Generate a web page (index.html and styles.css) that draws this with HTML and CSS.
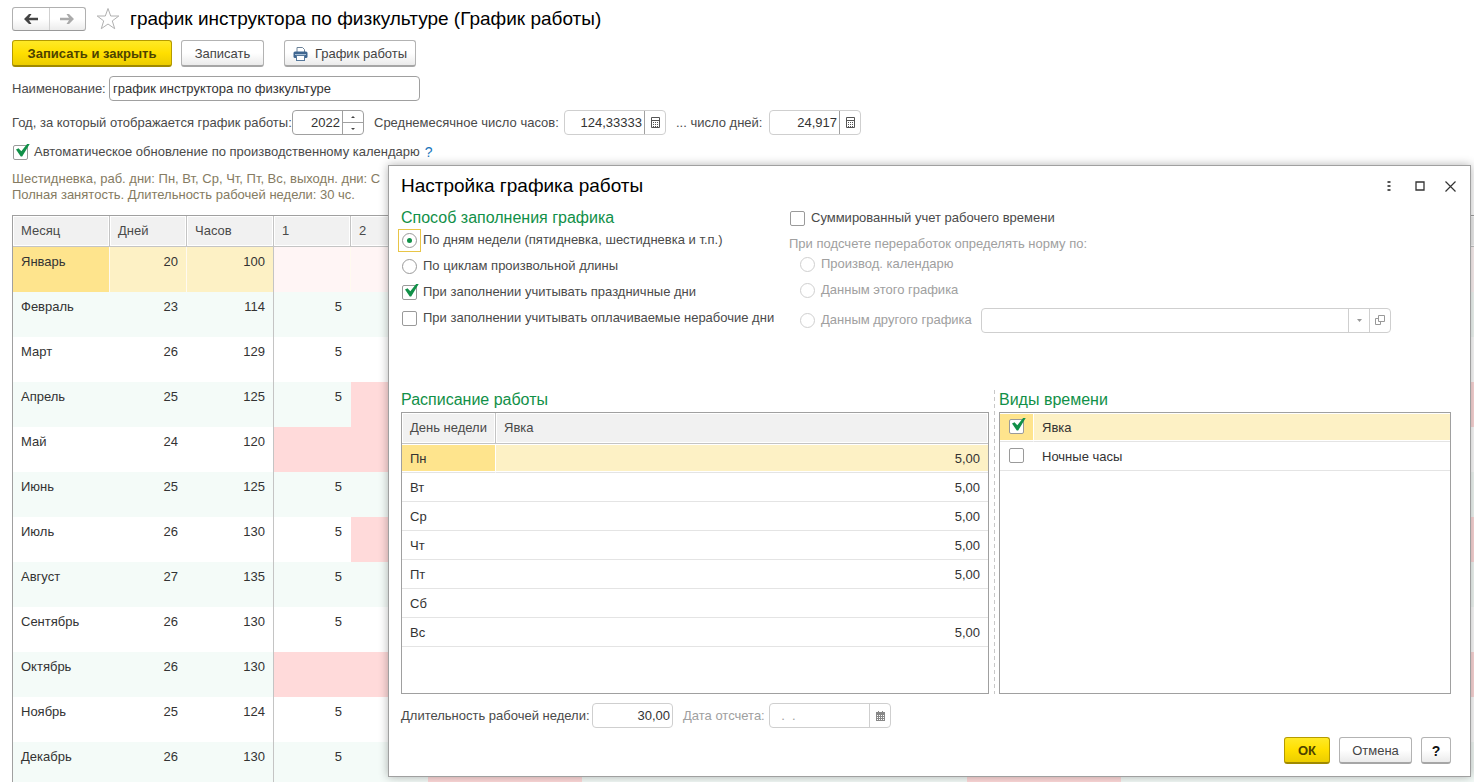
FILE: index.html
```html
<!DOCTYPE html>
<html lang="ru">
<head>
<meta charset="utf-8">
<title>График работы</title>
<link rel="stylesheet" href="styles.css">
</head>
<body>
<main class="page">
  <header class="page-head">
    <div class="nav-group">
      <button class="nav-btn" type="button" aria-label="Назад"><svg width="14" height="10" viewBox="0 0 14 10"><path d="M0 5 5 0h2.500L5 3.800h9v2.400H5L7.500 10H5z" fill="#444"/></svg></button>
      <button class="nav-btn" type="button" aria-label="Вперёд"><svg width="14" height="10" viewBox="0 0 14 10"><path d="M14 5 9 0H6.500L9 3.800H0v2.400h9L6.500 10H9z" fill="#aaa"/></svg></button>
    </div>
    <svg class="star" width="24" height="24" viewBox="0 0 24 24"><path d="M12 1.500 14.700 9h8.100l-6.500 4.900 2.400 7.800L12 17l-6.700 4.700 2.400-7.800L1.200 9h8.100z" fill="#fff" stroke="#b0b0b0"/></svg>
    <h1 class="title">график инструктора по физкультуре (График работы)</h1>
  </header>

  <div class="toolbar">
    <button class="btn btn-primary btn-save" type="button">Записать и закрыть</button>
    <button class="btn btn-write" type="button">Записать</button>
    <button class="btn btn-print" type="button">
      <svg width="15" height="14" viewBox="0 0 15 14"><path d="M4 5V.500h5.500L11.500 2.500V5" fill="#fff" stroke="#6b8299"/><rect x=".5" y="4.500" width="14" height="6.500" rx="1.500" fill="#3f6690"/><path d="M2 7.500h11" stroke="#a9c0d6"/><rect x="3.500" y="8.500" width="8" height="5" fill="#fff" stroke="#57799c"/></svg>
      <span>График работы</span>
    </button>
  </div>

  <div class="row name-row">
    <label for="name">Наименование:</label>
    <input class="field name-field" id="name" type="text" value="график инструктора по физкультуре">
  </div>

  <div class="row year-row">
    <label for="year">Год, за который отображается график работы:</label>
    <div class="combo combo-year">
      <input class="num" id="year" type="text" value="2022">
      <div class="spin">
        <button type="button" aria-label="Больше"><svg width="4" height="2"><path d="M0 2 2 0l2 2z" fill="#444"/></svg></button>
        <button type="button" aria-label="Меньше"><svg width="4" height="2"><path d="M0 0h4L2 2z" fill="#444"/></svg></button>
      </div>
    </div>
    <label class="hours-label" for="hours">Среднемесячное число часов:</label>
    <div class="combo combo-hours soft">
      <input class="num" id="hours" type="text" value="124,33333">
      <button class="addon" type="button" aria-label="Калькулятор"><svg width="9" height="11"><path d="M.5.500h8v10h-8zM1 3.500h7" fill="none" stroke="#555"/><path d="M2 5.500h5M2 7.500h5M2 9.500h5" stroke="#555" stroke-dasharray="1 1"/></svg></button>
    </div>
    <label class="days-label" for="days">... число дней:</label>
    <div class="combo combo-days soft">
      <input class="num" id="days" type="text" value="24,917">
      <button class="addon" type="button" aria-label="Калькулятор"><svg width="9" height="11"><path d="M.5.500h8v10h-8zM1 3.500h7" fill="none" stroke="#555"/><path d="M2 5.500h5M2 7.500h5M2 9.500h5" stroke="#555" stroke-dasharray="1 1"/></svg></button>
    </div>
  </div>

  <div class="row auto-row">
    <label class="option"><input class="check" type="checkbox" checked><span>Автоматическое обновление по производственному календарю</span></label>
    <a class="hint" href="#">?</a>
  </div>

  <p class="summary">Шестидневка, раб. дни: Пн, Вт, Ср, Чт, Пт, Вс, выходн. дни: С<br>Полная занятость. Длительность рабочей недели: 30 чс.</p>

  <div class="calendar-wrap">
    <table class="calendar">
      <colgroup><col class="c-month"><col class="c-days"><col class="c-hours"><col class="c-day" span="16"></colgroup>
      <thead><tr id="calendar-head"><th>Месяц</th><th>Дней</th><th>Часов</th><th>1</th><th>2</th></tr></thead>
      <tbody id="calendar-body"></tbody>
    </table>
  </div>
</main>

<section class="dialog" role="dialog" aria-labelledby="dialog-title">
  <header class="dialog-head">
    <h2 class="title" id="dialog-title">Настройка графика работы</h2>
    <div class="window-tools">
      <button type="button" aria-label="Ещё"><svg width="4" height="12"><path d="M.5 1h3v2h-3zM.5 5h3v2h-3zM.5 9h3v2h-3z" fill="#555"/></svg></button>
      <button type="button" aria-label="Развернуть"><svg width="10" height="10"><path d="M1 1h8v8H1z" fill="none" stroke="#333" stroke-width="1.300"/></svg></button>
      <button type="button" aria-label="Закрыть"><svg width="11" height="11"><path d="m.5.500 10 10m0-10-10 10" stroke="#333" stroke-width="1.200"/></svg></button>
    </div>
  </header>

  <div class="settings">
    <fieldset class="method">
      <legend class="section-title">Способ заполнения графика</legend>
      <label class="option"><span class="radio-slot focused"><input class="radio" type="radio" name="method" checked></span><span>По дням недели (пятидневка, шестидневка и т.п.)</span></label>
      <label class="option"><span class="radio-slot"><input class="radio" type="radio" name="method"></span><span>По циклам произвольной длины</span></label>
      <label class="option"><input class="check" type="checkbox" checked><span>При заполнении учитывать праздничные дни</span></label>
      <label class="option"><input class="check" type="checkbox"><span>При заполнении учитывать оплачиваемые нерабочие дни</span></label>
    </fieldset>
    <div class="norm">
      <label class="option"><input class="check" type="checkbox"><span>Суммированный учет рабочего времени</span></label>
      <p class="muted norm-title">При подсчете переработок определять норму по:</p>
      <div class="norm-list muted">
        <label class="option"><input class="radio" type="radio" name="norm" disabled><span>Производ. календарю</span></label>
        <label class="option"><input class="radio" type="radio" name="norm" disabled><span>Данным этого графика</span></label>
        <div class="other-row">
          <label class="option"><input class="radio" type="radio" name="norm" disabled><span>Данным другого графика</span></label>
          <div class="combo combo-other soft">
            <input type="text" aria-label="Другой график" disabled>
            <button class="addon" type="button" aria-label="Выбрать" disabled><svg width="5" height="3"><path d="M0 0h5L2.500 3z" fill="#999"/></svg></button>
            <button class="addon" type="button" aria-label="Открыть" disabled><svg width="10" height="10"><path d="M3.500.500h6v6h-6zM3 3.500H.5v6h5V7" fill="none" stroke="#999"/></svg></button>
          </div>
        </div>
      </div>
    </div>
  </div>

  <div class="panels">
    <section class="panel">
      <h3 class="section-title">Расписание работы</h3>
      <div class="list-box">
        <table class="list schedule">
          <colgroup><col class="c-weekday"><col></colgroup>
          <thead><tr><th>День недели</th><th>Явка</th></tr></thead>
          <tbody>
            <tr class="selected"><td>Пн</td><td>5,00</td></tr>
            <tr><td>Вт</td><td>5,00</td></tr>
            <tr><td>Ср</td><td>5,00</td></tr>
            <tr><td>Чт</td><td>5,00</td></tr>
            <tr><td>Пт</td><td>5,00</td></tr>
            <tr><td>Сб</td><td></td></tr>
            <tr><td>Вс</td><td>5,00</td></tr>
          </tbody>
        </table>
      </div>
    </section>
    <div class="splitter"></div>
    <section class="panel">
      <h3 class="section-title">Виды времени</h3>
      <div class="list-box">
        <table class="list kinds">
          <colgroup><col class="c-check"><col></colgroup>
          <tbody>
            <tr class="selected"><td><input class="check" id="kind-work" type="checkbox" checked></td><td><label for="kind-work">Явка</label></td></tr>
            <tr><td><input class="check" id="kind-night" type="checkbox"></td><td><label for="kind-night">Ночные часы</label></td></tr>
          </tbody>
        </table>
      </div>
    </section>
  </div>

  <div class="row week-row">
    <label for="week">Длительность рабочей недели:</label>
    <input class="field soft num week-field" id="week" type="text" value="30,00">
    <label class="muted date-label" for="start">Дата отсчета:</label>
    <div class="combo combo-date soft">
      <input id="start" type="text" value="  .  ." disabled>
      <button class="addon" type="button" aria-label="Календарь" disabled><svg width="9" height="10"><path d="M0 1h9v9H0z" fill="#888"/><path d="M1 4.500h7M1 6.500h7M1 8.500h7" stroke="#fff" stroke-dasharray="1 1"/><path d="M2.500 0v2M6.500 0v2" stroke="#888"/></svg></button>
    </div>
  </div>

  <footer class="dialog-foot">
    <button class="btn btn-primary btn-ok" type="button">ОК</button>
    <button class="btn btn-cancel" type="button">Отмена</button>
    <button class="btn btn-help" type="button">?</button>
  </footer>
</section>
<script src="script.js"></script>
</body>
</html>
```

FILE: styles.css
```css
* {
  box-sizing: border-box;
}

body {
  margin: 0;
  height: 100vh;
  overflow: hidden;
  position: relative;
  background: #fff;
  color: #4a4a4a;
  font: 13px/16px "Liberation Sans", Arial, sans-serif;
}

h1, h2, h3, p, fieldset, legend {
  margin: 0;
  padding: 0;
  border: 0;
  font-weight: normal;
}

button, input {
  font: inherit;
  color: inherit;
  margin: 0;
}

svg {
  display: block;
  flex: none;
}

.page {
  padding: 6px 0 0 12px;
}

.page-head {
  display: flex;
  align-items: center;
  height: 25px;
}

.title {
  font-size: 19px;
  line-height: 24px;
  color: #000;
  white-space: nowrap;
}

.nav-group {
  display: flex;
  width: 74px;
  height: 24px;
  border: 1px solid #b0b0b0;
  border-bottom-color: #999;
  border-radius: 3px;
  background: linear-gradient(#fff 50%, #ececec);
}

.nav-btn {
  flex: 1;
  display: flex;
  align-items: center;
  justify-content: center;
  border: 0;
  padding: 0;
  background: none;
}

.nav-btn + .nav-btn {
  border-left: 1px solid #d0d0d0;
}

.star {
  margin: 0 10px;
}

.toolbar {
  display: flex;
  margin-top: 9px;
}

.btn {
  display: flex;
  align-items: center;
  justify-content: center;
  gap: 7px;
  height: 27px;
  padding: 1px 0 0;
  border: 1px solid #b3b3b3;
  border-bottom: 2px solid #a6a6a6;
  border-radius: 3px;
  background: linear-gradient(#fff 50%, #ebebeb);
  color: #444;
  white-space: nowrap;
}

.btn-primary {
  border-color: #b59b00;
  border-bottom-color: #a08a00;
  background: linear-gradient(#ffe926, #ffdf00 50%, #eccd00);
  color: #4d4300;
  font-weight: bold;
}

.btn-save {
  width: 160px;
}

.btn-write {
  width: 83px;
  margin-left: 9px;
}

.btn-print {
  width: 132px;
  margin-left: 20px;
}

.row {
  display: flex;
  align-items: center;
  white-space: nowrap;
}

.name-row {
  margin-top: 9px;
}

.name-row label {
  width: 97px;
}

.field {
  height: 25px;
  border: 1px solid #a0a0a0;
  border-radius: 4px;
  padding: 0 3px;
  background: #fff;
  color: #333;
}

.name-field {
  width: 311px;
}

.year-row {
  margin-top: 9px;
}

.year-row > label:first-child {
  width: 280px;
}

.hours-label {
  width: 190px;
  margin-left: 10px;
}

.days-label {
  width: 93px;
  margin-left: 10px;
}

.combo {
  display: flex;
  height: 25px;
  border: 1px solid #a0a0a0;
  border-radius: 4px;
  background: #fff;
  overflow: hidden;
}

.combo.soft,
.field.soft {
  border-color: #cfcfcf;
}

.combo input {
  flex: 1;
  min-width: 0;
  border: 0;
  padding: 0 2px;
  background: none;
  color: #333;
}

.num {
  text-align: right;
}

.combo-year {
  width: 72px;
}

.combo-hours {
  width: 102px;
}

.combo-days {
  width: 92px;
}

.spin {
  display: flex;
  flex-direction: column;
  width: 21px;
  border-left: 1px solid #a0a0a0;
}

.spin button {
  flex: 1;
  display: flex;
  align-items: center;
  justify-content: center;
  border: 0;
  padding: 0;
  background: none;
}

.spin button + button {
  border-top: 1px solid #a0a0a0;
}

.addon {
  display: flex;
  align-items: center;
  justify-content: center;
  width: 21px;
  padding: 0;
  border: 0;
  border-left: 1px solid #cfcfcf;
  background: none;
}

.combo-hours .addon,
.combo-days .addon {
  border-left-color: #a0a0a0;
}

.option {
  display: flex;
  align-items: center;
  gap: 6px;
  white-space: nowrap;
}

.check,
.radio {
  appearance: none;
  flex: none;
  display: block;
  position: relative;
  width: 15px;
  height: 15px;
  border: 1px solid #9a9a9a;
  border-radius: 2px;
  background: #fff;
}

.check:checked::after {
  content: "";
  position: absolute;
  left: 2px;
  top: -2px;
  width: 14px;
  height: 13px;
  background: #119048;
  clip-path: polygon(0 46%, 18% 36%, 38% 60%, 82% 0, 100% 0, 44% 100%, 34% 100%);
}

.radio {
  border-radius: 50%;
}

.radio:disabled {
  border-color: #cfcfcf;
}

.radio:checked::after {
  content: "";
  position: absolute;
  left: 4px;
  top: 4px;
  width: 5px;
  height: 5px;
  border-radius: 50%;
  background: #119048;
}

.radio-slot {
  width: 15px;
  height: 15px;
}

.radio-slot.focused {
  outline: 1px solid #e8c547;
  outline-offset: 3px;
}

.auto-row {
  margin-top: 9px;
  gap: 5px;
  padding-left: 1px;
}

.hint {
  color: #1b75bb;
  text-decoration: none;
  font-size: 14px;
}

.summary {
  margin-top: 11px;
  color: #857b62;
  white-space: nowrap;
}

.calendar-wrap {
  margin-top: 12px;
  border-top: 1px solid #a0a0a0;
  border-left: 1px solid #a0a0a0;
  overflow: hidden;
}

.calendar,
.list {
  border-collapse: separate;
  border-spacing: 0;
  table-layout: fixed;
}

.calendar {
  width: 1493px;
}

.c-month {
  width: 97px;
}

.c-days,
.c-day {
  width: 77px;
}

.c-hours {
  width: 87px;
}

.calendar th {
  height: 31px;
  padding: 0 8px;
  border-right: 1px solid #c4c4c4;
  border-bottom: 1px solid #c4c4c4;
  background: #f1f1f1;
  box-shadow: inset 0 0 0 1px #fff;
  text-align: left;
  font-weight: normal;
}

.calendar td {
  height: 45px;
  padding: 7px 9px 0 8px;
  vertical-align: top;
  text-align: right;
  color: #333;
}

.calendar td:first-child {
  text-align: left;
}

.calendar td:nth-child(3) {
  padding-right: 8px;
  border-right: 1px solid #c4c4c4;
}

.calendar tr:nth-child(even) td {
  background: #f4fbf8;
}

.calendar tbody td.off {
  background: #ffdada;
}

.calendar tbody tr.current td {
  padding-right: 8px;
  background: #fdf1c5;
  border-right: 1px solid #fffaf0;
}

.calendar tbody tr.current td:first-child {
  background: #fee48d;
}

.calendar tbody tr.current td:nth-child(3) {
  border-right-color: #c4c4c4;
}

.calendar tbody tr.current td.off {
  background: #fff5f5;
}

.dialog {
  position: absolute;
  left: 388px;
  right: 3px;
  top: 165px;
  padding: 8px 19px 12px 12px;
  border: 1px solid #a0a0a0;
  background: #fff;
  box-shadow: 0 0 9px rgba(0, 0, 0, 0.300);
}

.dialog-head {
  display: flex;
  justify-content: space-between;
  align-items: center;
}

.window-tools {
  display: flex;
  gap: 10px;
}

.window-tools button {
  display: flex;
  align-items: center;
  justify-content: center;
  width: 21px;
  height: 21px;
  padding: 0;
  border: 0;
  background: none;
}

.window-tools button:last-child {
  margin-right: -10px;
}

.section-title {
  font-size: 16px;
  line-height: 20px;
  color: #119048;
  white-space: nowrap;
}

.settings {
  display: flex;
  margin-top: 10px;
  height: 182px;
}

.method {
  width: 388px;
}

.method .option,
.norm-list .option {
  height: 26px;
}

.method .option {
  padding-left: 1px;
}

.method legend + .option {
  margin-top: -1px;
}

.norm {
  flex: 1;
  padding-top: 2px;
}

.norm .option {
  padding-left: 1px;
}

.muted {
  color: #a0a0a0;
}

.norm-title {
  margin-top: 10px;
}

.norm-list {
  margin-top: -1px;
  padding-left: 10px;
}

.other-row {
  display: flex;
  align-items: center;
  justify-content: space-between;
  height: 34px;
  padding-right: 60px;
}

.combo-other {
  width: 410px;
}

.panels {
  display: grid;
  grid-template-columns: minmax(0, 588fr) 10px minmax(0, 452fr);
}

.list-box {
  height: 282px;
  margin-top: 2px;
  border: 1px solid #a0a0a0;
}

.splitter {
  width: 1px;
  justify-self: center;
  background: repeating-linear-gradient(#c8c8c8 0 4px, transparent 4px 7px);
}

.list {
  width: 100%;
}

.c-weekday {
  width: 94px;
}

.c-check {
  width: 34px;
}

.list th {
  height: 31px;
  padding: 0 8px;
  border-bottom: 1px solid #c4c4c4;
  background: #f1f1f1;
  box-shadow: inset 0 0 0 1px #fff;
  text-align: left;
  font-weight: normal;
  white-space: nowrap;
}

.list th:first-child {
  border-right: 1px solid #c4c4c4;
}

.list td {
  height: 29px;
  padding: 1px 8px 0;
  border-bottom: 1px solid #e4e4e4;
  color: #333;
}

.schedule td:last-child {
  text-align: right;
}

.selected td {
  background: #fdf1c5;
  box-shadow: inset 0 1px #fff, inset 0 -1px #fff;
}

.list .selected td:first-child {
  background: #fee48d;
  border-right: 1px solid #fff;
}

.kinds td:first-child {
  padding: 0 0 2px 9px;
}

.week-row {
  margin-top: 9px;
}

.week-row > label:first-child {
  width: 191px;
}

.week-field {
  width: 81px;
  padding: 0 2px;
}

.date-label {
  width: 86px;
  margin-left: 10px;
}

.combo-date {
  width: 122px;
}

.combo-date input {
  padding: 0 4px;
  color: #a0a0a0;
  white-space: pre;
}

.dialog-foot {
  display: flex;
  justify-content: flex-end;
  gap: 9px;
  margin-top: 9px;
}

.btn-ok {
  width: 46px;
}

.btn-cancel {
  width: 73px;
}

.btn-help {
  width: 30px;
  color: #111;
  font-size: 14px;
  font-weight: bold;
}
```

FILE: script.js
```js
const DAYS_SHOWN = 16;

const months = [
  { name: "Январь", days: 20, hours: 100, first: "", off: [1, 2, 16] },
  { name: "Февраль", days: 23, hours: 114, first: 5, off: [] },
  { name: "Март", days: 26, hours: 129, first: 5, off: [] },
  { name: "Апрель", days: 25, hours: 125, first: 5, off: [2, 16] },
  { name: "Май", days: 24, hours: 120, first: "", off: [1, 2] },
  { name: "Июнь", days: 25, hours: 125, first: 5, off: [] },
  { name: "Июль", days: 26, hours: 130, first: 5, off: [2, 16] },
  { name: "Август", days: 27, hours: 135, first: 5, off: [] },
  { name: "Сентябрь", days: 26, hours: 130, first: 5, off: [] },
  { name: "Октябрь", days: 26, hours: 130, first: "", off: [1, 2, 16] },
  { name: "Ноябрь", days: 25, hours: 124, first: 5, off: [] },
  { name: "Декабрь", days: 26, hours: 130, first: 5, off: [3, 4, 10, 11] },
];

const head = document.getElementById("calendar-head");
while (head.children.length < DAYS_SHOWN + 3) {
  head.append(document.createElement("th"));
}

const body = document.getElementById("calendar-body");
months.forEach((month, index) => {
  const row = body.insertRow();
  if (index === 0) row.className = "current";
  [month.name, month.days, month.hours].forEach((value) => {
    row.insertCell().textContent = value;
  });
  for (let day = 1; day <= DAYS_SHOWN; day += 1) {
    const cell = row.insertCell();
    if (day === 1) cell.textContent = month.first;
    if (month.off.includes(day)) cell.className = "off";
  }
});
```
